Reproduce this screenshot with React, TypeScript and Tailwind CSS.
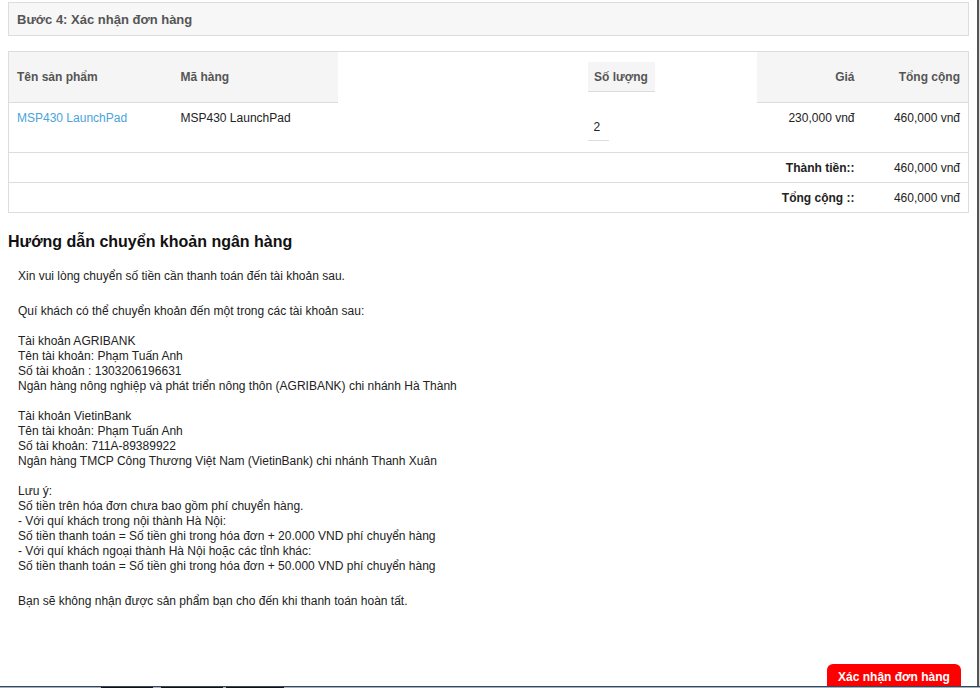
import React from "react";

const font = { fontFamily: '"Liberation Sans", Arial, sans-serif' };

function OrderTable() {
  return (
    <table className="w-[960px] table-fixed border-collapse border border-[#dddddd] text-[12px] text-[#222]">
      <colgroup>
        <col className="w-[164px]" />
        <col className="w-[165px]" />
        <col className="w-[250px]" />
        <col className="w-[67px]" />
        <col className="w-[102px]" />
        <col className="w-[106px]" />
        <col className="w-[106px]" />
      </colgroup>
      <thead>
        <tr className="h-[51px] font-bold text-[#555]">
          <th className="bg-[#f5f5f5] border-b border-[#dddddd] px-2 text-left">Tên sản phẩm</th>
          <th className="bg-[#f5f5f5] border-b border-[#dddddd] px-2 text-left">Mã hàng</th>
          <th></th>
          <th className="p-0 align-middle">
            <div className="h-[30px] flex items-center justify-center bg-[#f5f5f5] border-b border-[#dddddd]">
              Số lượng
            </div>
          </th>
          <th></th>
          <th className="bg-[#f5f5f5] border-b border-[#dddddd] px-2 text-right">Giá</th>
          <th className="bg-[#f5f5f5] border-b border-[#dddddd] px-2 text-right">Tổng cộng</th>
        </tr>
      </thead>
      <tbody>
        <tr className="h-[50px] border-b border-[#dddddd]">
          <td className="px-2 pt-[6px] align-top">
            <a className="text-[#4aa3dc]">MSP430 LaunchPad</a>
          </td>
          <td className="px-2 pt-[6px] align-top">MSP430 LaunchPad</td>
          <td></td>
          <td className="p-0 align-top pt-[8px]">
            <div className="w-[21px] h-[30px] pl-[6px] pt-[9px] leading-[15px] border-b border-[#dddddd]">2</div>
          </td>
          <td></td>
          <td className="px-2 pt-[6px] align-top text-right">230,000 vnđ</td>
          <td className="px-2 pt-[6px] align-top text-right">460,000 vnđ</td>
        </tr>
        <tr className="h-[30px] border-b border-[#dddddd]">
          <td colSpan={6} className="px-2 text-right font-bold">Thành tiền::</td>
          <td className="px-2 text-right">460,000 vnđ</td>
        </tr>
        <tr className="h-[30px]">
          <td colSpan={6} className="px-2 text-right font-bold">Tổng cộng ::</td>
          <td className="px-2 text-right">460,000 vnđ</td>
        </tr>
      </tbody>
    </table>
  );
}

export default function App() {
  return (
    <div className="w-[980px] h-[688px] overflow-hidden flex flex-col bg-white" style={font}>
      <div className="flex flex-1 min-h-0">
        <div className="flex-1 px-2 pt-[2px] overflow-hidden">
          <div className="h-[34px] bg-[#f7f7f7] border border-[#dddddd] flex items-center pl-[8px] pt-[1px] text-[13px] font-bold text-[#555]">
            Bước 4: Xác nhận đơn hàng
          </div>
          <div className="mt-[15px]">
            <OrderTable />
          </div>
          <h2 className="mt-[19px] text-[16px] leading-[20px] font-bold text-[#111]">
            Hướng dẫn chuyển khoản ngân hàng
          </h2>
          <div className="mt-[17px] pl-[10px] text-[12px] leading-[15px] text-[#222]">
            <p>Xin vui lòng chuyển số tiền cần thanh toán đến tài khoản sau.</p>
            <p className="mt-[20px]">
              Quí khách có thể chuyển khoản đến một trong các tài khoản sau:
              <br />
              <br />
              Tài khoản AGRIBANK
              <br />
              Tên tài khoản: Phạm Tuấn Anh
              <br />
              Số tài khoản : 1303206196631
              <br />
              Ngân hàng nông nghiệp và phát triển nông thôn (AGRIBANK) chi nhánh Hà Thành
              <br />
              <br />
              Tài khoản VietinBank
              <br />
              Tên tài khoản: Phạm Tuấn Anh
              <br />
              Số tài khoản: 711A-89389922
              <br />
              Ngân hàng TMCP Công Thương Việt Nam (VietinBank) chi nhánh Thanh Xuân
              <br />
              <br />
              Lưu ý:
              <br />
              Số tiền trên hóa đơn chưa bao gồm phí chuyển hàng.
              <br />
              - Với quí khách trong nội thành Hà Nội:
              <br />
              Số tiền thanh toán = Số tiền ghi trong hóa đơn + 20.000 VND phí chuyển hàng
              <br />
              - Với quí khách ngoại thành Hà Nội hoặc các tỉnh khác:
              <br />
              Số tiền thanh toán = Số tiền ghi trong hóa đơn + 50.000 VND phí chuyển hàng
            </p>
            <p className="mt-[20px]">Bạn sẽ không nhận được sản phẩm bạn cho đến khi thanh toán hoàn tất.</p>
          </div>
          <div className="mt-[55px] flex justify-end pr-[8px]">
            <button className="h-[28px] w-[134px] rounded-[6px] bg-[#ff0000] text-white text-[12px] font-bold flex justify-center pt-[4px]">
              Xác nhận đơn hàng
            </button>
          </div>
        </div>
        <div className="w-[2px] bg-[#555555]" />
        <div className="w-[1px] bg-[#d8d8d8]" />
      </div>
      <div className="h-[1px] bg-[#3a4656]" />
      <div className="h-[1px] flex bg-[#9fb0c4]">
        <div className="w-[101px]" />
        <div className="w-[52px] bg-[#111]" />
        <div className="w-[8px]" />
        <div className="w-[62px] bg-[#111]" />
        <div className="w-[3px]" />
        <div className="w-[58px] bg-[#111]" />
      </div>
    </div>
  );
}
